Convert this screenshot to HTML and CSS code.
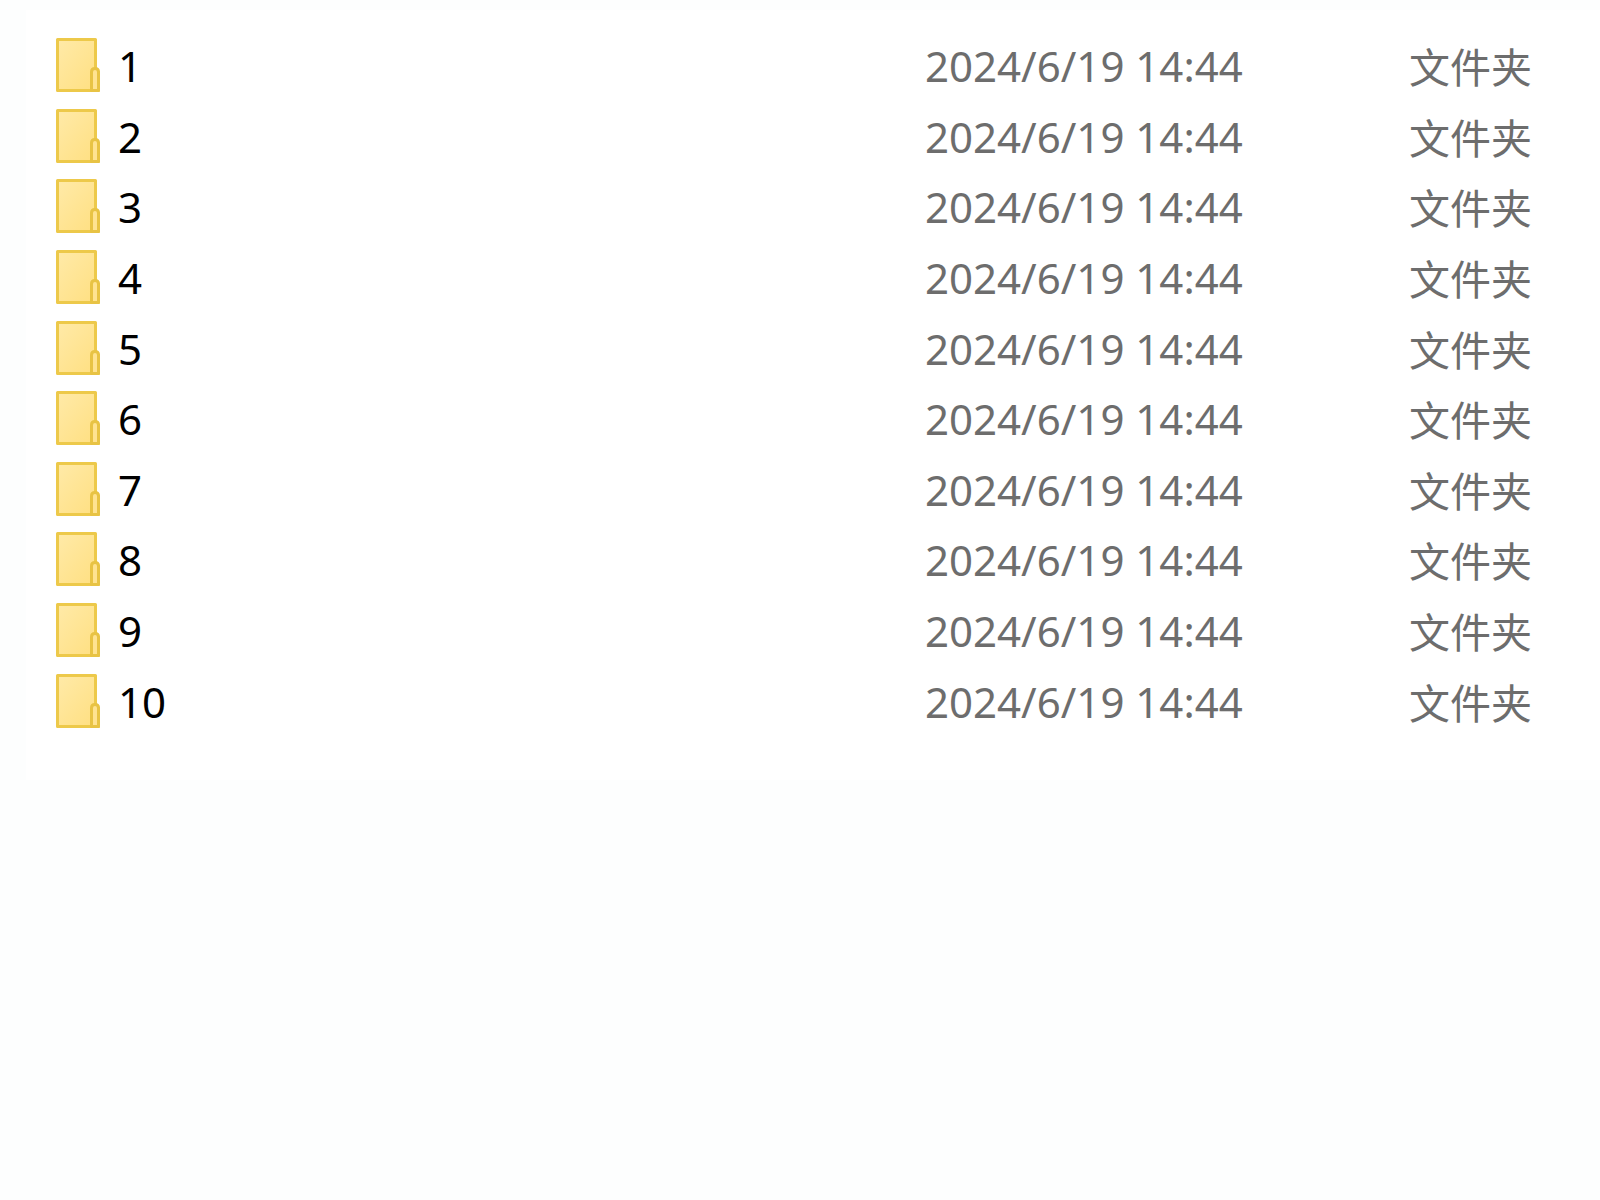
FILE: index.html
```
<!DOCTYPE html>
<html lang="zh-CN">
<head>
<meta charset="UTF-8">
<meta name="viewport" content="width=device-width, initial-scale=1.0">
<title>文件夹</title>
<link rel="stylesheet" href="styles.css">
</head>
<body>
<svg class="defs" width="0" height="0">
    <defs>
        <linearGradient id="paper" x1="0" y1="0" x2="1" y2="1">
            <stop offset="0" stop-color="#ffeaa8"/>
            <stop offset="1" stop-color="#ffdf80"/>
        </linearGradient>
        <symbol id="folder" viewBox="0 0 44 54">
            <path d="M1.5 1.5H39.5V31L42.5 34V52.5H1.5Z" fill="url(#paper)" stroke="#edc94a" stroke-width="3" stroke-linejoin="round"/>
            <path d="M35.5 52.5V34Q35.5 30.5 39 30.5Q42.5 30.5 42.5 34V52.5Z" fill="#ffe391" stroke="#e8c344" stroke-width="3" stroke-linejoin="round"/>
        </symbol>
    </defs>
</svg>
<div class="panel">
    <table class="files">
        <tbody>
            <tr><td class="name"><div class="item"><svg class="icon"><use href="#folder"/></svg><span>1</span></div></td><td class="date">2024/6/19 14:44</td><td class="type">文件夹</td></tr>
            <tr><td class="name"><div class="item"><svg class="icon"><use href="#folder"/></svg><span>2</span></div></td><td class="date">2024/6/19 14:44</td><td class="type">文件夹</td></tr>
            <tr><td class="name"><div class="item"><svg class="icon"><use href="#folder"/></svg><span>3</span></div></td><td class="date">2024/6/19 14:44</td><td class="type">文件夹</td></tr>
            <tr><td class="name"><div class="item"><svg class="icon"><use href="#folder"/></svg><span>4</span></div></td><td class="date">2024/6/19 14:44</td><td class="type">文件夹</td></tr>
            <tr><td class="name"><div class="item"><svg class="icon"><use href="#folder"/></svg><span>5</span></div></td><td class="date">2024/6/19 14:44</td><td class="type">文件夹</td></tr>
            <tr><td class="name"><div class="item"><svg class="icon"><use href="#folder"/></svg><span>6</span></div></td><td class="date">2024/6/19 14:44</td><td class="type">文件夹</td></tr>
            <tr><td class="name"><div class="item"><svg class="icon"><use href="#folder"/></svg><span>7</span></div></td><td class="date">2024/6/19 14:44</td><td class="type">文件夹</td></tr>
            <tr><td class="name"><div class="item"><svg class="icon"><use href="#folder"/></svg><span>8</span></div></td><td class="date">2024/6/19 14:44</td><td class="type">文件夹</td></tr>
            <tr><td class="name"><div class="item"><svg class="icon"><use href="#folder"/></svg><span>9</span></div></td><td class="date">2024/6/19 14:44</td><td class="type">文件夹</td></tr>
            <tr><td class="name"><div class="item"><svg class="icon"><use href="#folder"/></svg><span>10</span></div></td><td class="date">2024/6/19 14:44</td><td class="type">文件夹</td></tr>
        </tbody>
    </table>
</div>
</body>
</html>
```

FILE: styles.css
```
body {
    margin: 0;
    padding: 10px 0 0 26px;
    background-color: #fdfefe;
    font-family: "Noto Sans", "Noto Sans CJK SC", sans-serif;
    font-size: 42px;
    line-height: 60px;
}
.defs {
    display: block;
}
.panel {
    padding: 20px 0 44px 30px;
    background-color: #fff;
}
.files {
    width: 100%;
    height: 706px;
    border-collapse: collapse;
    table-layout: fixed;
}
td {
    padding: 0;
    vertical-align: middle;
    white-space: nowrap;
}
.date {
    width: 484px;
    padding-top: 2px;
    color: #6d6d6d;
}
.type {
    width: 191px;
    padding-top: 4px;
    font-size: 41px;
    color: #6d6d6d;
}
.item {
    display: flex;
    align-items: center;
    gap: 18px;
    color: #000;
}
.item span {
    padding-top: 2px;
}
.icon {
    width: 44px;
    height: 54px;
}
```
